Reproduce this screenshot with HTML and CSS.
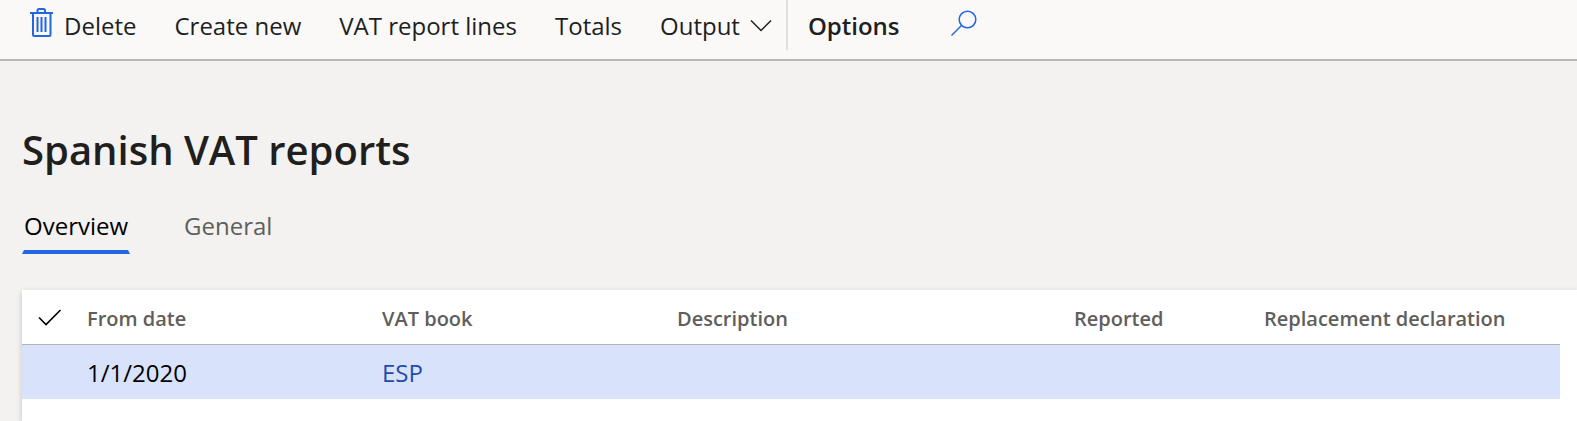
FILE: index.html
```
<!DOCTYPE html>
<html lang="en">

<head>
    <meta charset="UTF-8">
    <meta name="viewport" content="width=device-width, initial-scale=1.0">
    <title>Spanish VAT reports</title>
    <link rel="stylesheet" href="styles.css">
</head>

<body>
    <div class="toolbar">
        <button type="button" class="action">
            <svg class="trash" width="24" height="30" viewBox="0 0 24 30" fill="none" stroke="#2266e3" stroke-width="2">
                <path d="M0 5H23M7.500 5V2.500Q7.500 1 9 1H13.500Q15 1 15 2.500V5M3 5V26.500Q3 28 4.500 28H19Q20.500 28 20.500 26.500V5" />
                <path d="M7.500 9V24M11.500 9V24M15.500 9V24" />
            </svg>
            Delete
        </button>
        <button type="button" class="action">Create new</button>
        <button type="button" class="action">VAT report lines</button>
        <button type="button" class="action">Totals</button>
        <button type="button" class="action">
            Output
            <svg width="22" height="14" viewBox="0 0 22 14" fill="none" stroke="#201f1e" stroke-width="1.500">
                <path d="M1 1.500L11 11.500L21 1.500" />
            </svg>
        </button>
        <div class="options">
            <button type="button" class="action bold">Options</button>
            <button type="button" class="action" aria-label="Search">
                <svg class="search" width="28" height="28" viewBox="0 0 28 28" fill="none" stroke="#2266e3" stroke-width="1.500">
                    <circle cx="17.500" cy="10.500" r="8.300" />
                    <path d="M11.500 16.500L1.500 26.500" />
                </svg>
            </button>
        </div>
    </div>

    <main>
        <h1>Spanish VAT reports</h1>
        <div class="tabs" role="tablist">
            <button type="button" class="tab active" role="tab" aria-selected="true">Overview</button>
            <button type="button" class="tab" role="tab" aria-selected="false">General</button>
        </div>
        <div class="grid">
            <table>
                <colgroup>
                    <col class="col-check">
                    <col class="col-date">
                    <col class="col-book">
                    <col class="col-description">
                    <col class="col-reported">
                    <col>
                </colgroup>
                <thead>
                    <tr>
                        <th class="check" aria-label="Select all">
                            <svg width="24" height="17" viewBox="0 0 24 17" fill="none" stroke="#000000" stroke-width="1.600">
                                <path d="M1 8.500L8 15.500L22.500 1" />
                            </svg>
                        </th>
                        <th>From date</th>
                        <th>VAT book</th>
                        <th>Description</th>
                        <th>Reported</th>
                        <th>Replacement declaration</th>
                    </tr>
                </thead>
                <tbody>
                    <tr class="selected">
                        <td></td>
                        <td>1/1/2020</td>
                        <td><a href="#">ESP</a></td>
                        <td></td>
                        <td></td>
                        <td></td>
                    </tr>
                </tbody>
            </table>
        </div>
    </main>
</body>

</html>
```
FILE: styles.css
```
* {
    box-sizing: border-box;
}

body {
    margin: 0;
    min-height: 100vh;
    display: flex;
    flex-direction: column;
    background-color: #f3f2f1;
    color: #201f1e;
    font-family: "Open Sans", "Noto Sans", sans-serif;
    font-size: 24px;
}

button {
    border: none;
    padding: 0;
    background: none;
    color: inherit;
    font: inherit;
    cursor: pointer;
}

.toolbar {
    display: flex;
    align-items: flex-start;
    gap: 38px;
    height: 61px;
    padding-left: 30px;
    background-color: #faf9f8;
    border-bottom: 2px solid #b9b8b7;
}

.action {
    display: flex;
    align-items: center;
    gap: 10px;
    height: 51px;
    white-space: nowrap;
}

.bold {
    font-weight: 600;
}

.trash,
.search {
    margin-bottom: 5px;
}

.options {
    display: flex;
    gap: 50px;
    height: 50px;
    margin-left: -24px;
    padding-left: 20px;
    border-left: 2px solid #e1dfdd;
}

main {
    flex: 1;
    display: flex;
    flex-direction: column;
    padding-left: 22px;
}

h1 {
    margin: 59px 0 0;
    font-size: 40px;
    line-height: 60px;
    font-weight: 600;
}

.tabs {
    display: flex;
    gap: 52px;
    margin-top: 25px;
}

/* side borders give the underline its slanted ends */
.tab {
    height: 49px;
    padding: 0 0 5px;
    border: 2px solid transparent;
    border-width: 0 2px 4px;
    color: #605e5c;
}

.tab.active {
    color: #000000;
    border-bottom-color: #2266e3;
}

.grid {
    flex: 1;
    margin-top: 36px;
    padding-right: 17px;
    background-color: #ffffff;
    box-shadow: 0 2px 6px rgba(0, 0, 0, 0.2);
}

table {
    width: 100%;
    border-collapse: separate;
    border-spacing: 0;
    table-layout: fixed;
}

th,
td {
    height: 54px;
    padding: 0;
    text-align: left;
    white-space: nowrap;
}

th {
    height: 55px;
    padding-top: 2px;
    border-bottom: 1px solid #b3b2b1;
    color: #605e5c;
    font-size: 20px;
    font-weight: 600;
}

td {
    color: #000000;
}

.check {
    padding: 0 0 0 16px;
}

.check svg {
    display: block;
}

.selected {
    background-color: #d8e3fb;
}

.selected a {
    color: #1f4bb0;
    text-decoration: none;
}

.col-check {
    width: 65px;
}

.col-date,
.col-book {
    width: 295px;
}

.col-description {
    width: 397px;
}

.col-reported {
    width: 190px;
}
```
